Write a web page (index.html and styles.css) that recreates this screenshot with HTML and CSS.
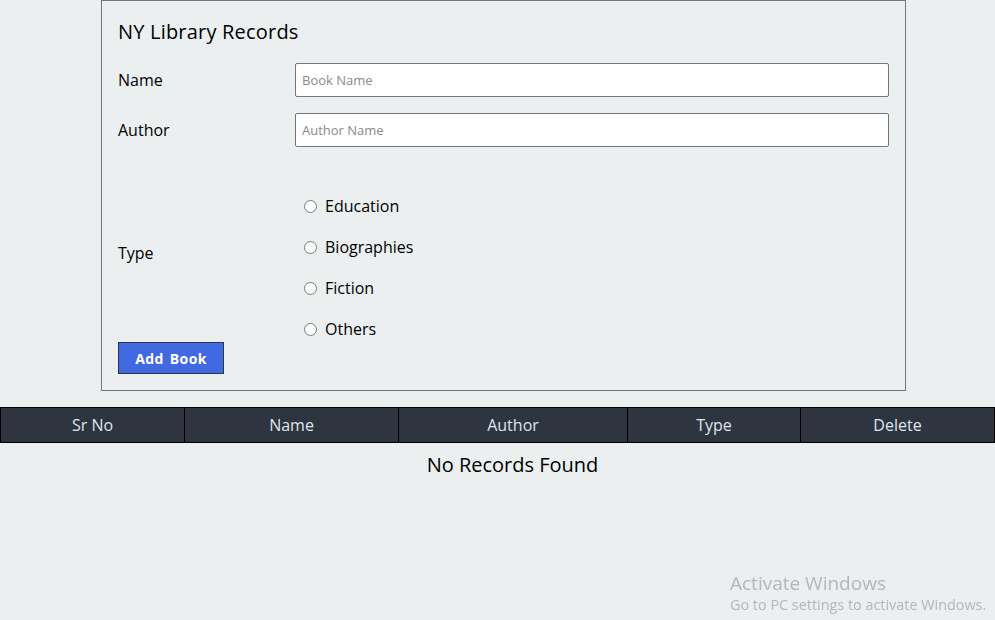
FILE: index.html
```html
<!DOCTYPE html>
<html>
<head>
<meta charset="utf-8">
<link rel="stylesheet" href="styles.css">
</head>
<body>
<div class="card">
  <h1 class="title">NY Library Records</h1>
  <div class="row">
    <label class="label">Name</label>
    <input class="field" type="text" placeholder="Book Name">
  </div>
  <div class="row">
    <label class="label">Author</label>
    <input class="field" type="text" placeholder="Author Name">
  </div>
  <div class="row type-row">
    <label class="label">Type</label>
    <div class="radios">
      <label class="radio"><input type="radio" name="type"><span>Education</span></label>
      <label class="radio"><input type="radio" name="type"><span>Biographies</span></label>
      <label class="radio"><input type="radio" name="type"><span>Fiction</span></label>
      <label class="radio"><input type="radio" name="type"><span>Others</span></label>
    </div>
  </div>
  <button class="btn">Add Book</button>
</div>

<table class="records">
  <thead>
    <tr>
      <th class="c1">Sr No</th>
      <th class="c2">Name</th>
      <th class="c3">Author</th>
      <th class="c4">Type</th>
      <th class="c5">Delete</th>
    </tr>
  </thead>
</table>
<p class="empty">No Records Found</p>

<div class="watermark">
  <div class="wm-title">Activate Windows</div>
  <div class="wm-sub">Go to PC settings to activate Windows.</div>
</div>
</body>
</html>
```
FILE: styles.css
```css
html, body {
  margin: 0;
  padding: 0;
  background: #ebeff0;
  font-family: "Open Sans", "Noto Sans", sans-serif;
  color: #000;
}

.card {
  box-sizing: border-box;
  width: 805px;
  margin: 0 0 16px 101px;
  border: 1px solid #777;
  padding: 16px 16px 16px 16px;
}

.title {
  margin: 0 0 16px 0;
  font-size: 20px;
  font-weight: 400;
  line-height: 30px;
  letter-spacing: 0.2px;
}

.row {
  display: grid;
  grid-template-columns: 177px 1fr;
  align-items: center;
  margin-bottom: 16px;
}

.label {
  font-size: 16px;
  line-height: 22px;
}

.field {
  box-sizing: border-box;
  height: 34px;
  width: 100%;
  margin: 0;
  border: 1px solid #767676;
  border-radius: 2px;
  background: #fff;
  padding: 0 6px;
  font-family: inherit;
  font-size: 13px;
}

.field::placeholder {
  color: #8a8a8a;
}

.type-row {
  margin-top: 17px;
  margin-bottom: 1px;
}

.radios {
  display: flex;
  flex-direction: column;
  gap: 17px;
  padding-top: 30px;
}

.radio {
  display: flex;
  align-items: center;
  height: 24px;
  font-size: 16px;
}

.radio input {
  width: 13px;
  height: 13px;
  margin: 0 8px 0 9px;
}

.btn {
  box-sizing: border-box;
  width: 106px;
  height: 32px;
  background: #4169e1;
  color: #fff;
  border: 1px solid #2a3550;
  font-family: inherit;
  font-size: 14px;
  font-weight: 700;
  letter-spacing: 0.4px;
  word-spacing: 2px;
  padding: 0;
}

.records {
  width: 100%;
  border-collapse: collapse;
  table-layout: fixed;
}

.records th {
  background: #2e3440;
  color: #dfe6ee;
  font-weight: 400;
  font-size: 16px;
  height: 34px;
  padding: 0;
  border: 1px solid #000;
  text-align: center;
}

.c1 { width: 183px; }
.c2 { width: 213px; }
.c3 { width: 228px; }
.c4 { width: 172px; }

.empty {
  margin: 7px 0 0 0;
  padding-left: 30px;
  text-align: center;
  font-size: 20px;
  line-height: 30px;
}

.watermark {
  position: fixed;
  left: 730px;
  top: 571px;
  color: #b4b7b9;
  font-family: "Open Sans", "Noto Sans", sans-serif;
}

.wm-title {
  font-size: 19px;
  line-height: 24px;
}

.wm-sub {
  font-size: 14.4px;
  line-height: 20px;
}
```
